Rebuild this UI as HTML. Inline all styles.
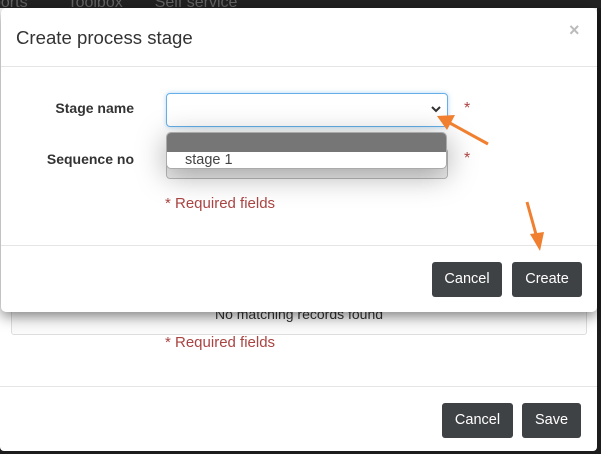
<!DOCTYPE html>
<html><head><style>
body{margin:0;width:601px;height:454px;overflow:hidden;background:#1c1c1c;font-family:"Liberation Sans",sans-serif;position:relative}
.a{position:absolute}
.btn{position:absolute;background:#3f4245;color:#fff;border-radius:3px;font-size:14.5px;text-align:center;line-height:35px;height:35px}
</style></head><body>
<div class="a" style="left:0;top:0;width:601px;height:8px;background:#222;overflow:hidden;color:#666;font-size:16px;line-height:6px"><span style="margin-left:-8px">ports</span><span style="margin-left:40px">Toolbox</span><span style="margin-left:32px">Self service</span></div>
<div class="a" style="left:0;top:8px;width:597px;height:443px;background:#fff;border-radius:0 0 4px 4px"></div>
<div class="a" style="left:11px;top:296px;width:574px;height:37px;border:1px solid #ddd;border-radius:3px;background:#fafafa;text-align:center;line-height:34px;font-size:14px;color:#333">No matching records found</div>
<div class="a" style="left:165px;top:334px;color:#a94442;font-size:15px">* Required fields</div>
<div class="a" style="left:0;top:386px;width:597px;height:1px;background:#e5e5e5"></div>
<div class="btn" style="left:442px;top:403px;width:71px">Cancel</div>
<div class="btn" style="left:522px;top:403px;width:59px">Save</div>
<div class="a" style="left:1px;top:8px;width:596px;height:304px;background:#fff;border-radius:5px;box-shadow:0 4px 14px rgba(0,0,0,.5)">
<div class="a" style="left:15px;top:19px;font-size:18.6px;color:#333">Create process stage</div>
<div class="a" style="left:568px;top:12px;font-size:18px;color:#bbb;font-weight:bold">×</div>
<div class="a" style="left:0;top:58px;width:596px;height:1px;background:#e5e5e5"></div>
<div class="a" style="left:0;top:92px;width:133px;text-align:right;font-size:14px;font-weight:bold;color:#333">Stage name</div>
<div class="a" style="left:0;top:143px;width:133px;text-align:right;font-size:14px;font-weight:bold;color:#333">Sequence no</div>
<div class="a" style="left:165px;top:85px;width:280px;height:32px;border:1px solid #66afe9;border-radius:4px;box-shadow:0 0 5px rgba(102,175,233,.5)"></div>
<svg class="a" style="left:429px;top:96px" width="12" height="10"><path d="M2 3 L6 7 L10 3" stroke="#333" stroke-width="2" fill="none"/></svg>
<div class="a" style="left:165px;top:140px;width:280px;height:29px;border:1px solid #bbb;border-radius:4px;background:#eee"></div>
<div class="a" style="left:165px;top:124px;width:281px;height:37px;border-radius:5px;overflow:hidden;box-shadow:0 6px 30px rgba(0,0,0,.35);background:#fff;border:1px solid #aaa;box-sizing:border-box">
<div style="height:19px;background:#767676"></div>
<div style="padding-left:18px;font-size:14.5px;color:#444;line-height:17px">stage 1</div></div>
<div class="a" style="left:463px;top:92px;color:#a94442;font-size:16px">*</div>
<div class="a" style="left:463px;top:142px;color:#a94442;font-size:16px">*</div>
<div class="a" style="left:164px;top:187px;color:#a94442;font-size:15px">* Required fields</div>
<div class="a" style="left:0;top:237px;width:596px;height:1px;background:#e5e5e5"></div>
<div class="btn" style="left:431px;top:254px;width:70px">Cancel</div>
<div class="btn" style="left:511px;top:254px;width:70px">Create</div>
</div>
<svg class="a" style="left:0;top:0" width="601" height="454">
<line x1="488" y1="144" x2="448" y2="122" stroke="#f08030" stroke-width="3"/>
<polygon points="437,116 455,115 447,130" fill="#f08030"/>
<line x1="527" y1="202" x2="537" y2="238" stroke="#f08030" stroke-width="3"/>
<polygon points="540,251 530,234 544,232" fill="#f08030"/>
</svg>
</body></html>
